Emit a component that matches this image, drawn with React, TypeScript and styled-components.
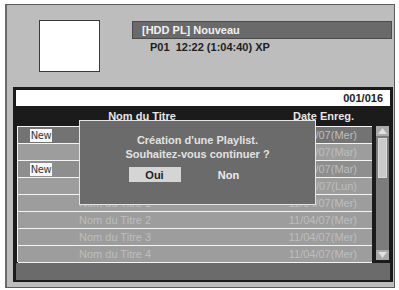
import React from 'react';
import styled, { createGlobalStyle } from 'styled-components';

const GlobalStyle = createGlobalStyle`
  html, body {
    margin: 0;
    padding: 0;
    background: #ffffff;
  }
  body {
    font-family: "Liberation Sans", Arial, sans-serif;
  }
`;

interface Row {
  isNew?: boolean;
  title: string;
  date: string;
  tone: 'dark' | 'mid' | 'light';
}

// titles of the first rows sit behind the dialog
const rows: Row[] = [
  { isNew: true, title: '', date: '11/04/07(Mer)', tone: 'dark' },
  { title: '', date: '11/04/07(Mar)', tone: 'light' },
  { isNew: true, title: '', date: '11/04/07(Mar)', tone: 'mid' },
  { title: '', date: '11/04/07(Lun)', tone: 'light' },
  { title: 'Nom du Titre 1', date: '11/04/07(Mer)', tone: 'light' },
  { title: 'Nom du Titre 2', date: '11/04/07(Mer)', tone: 'light' },
  { title: 'Nom du Titre 3', date: '11/04/07(Mer)', tone: 'light' },
  { title: 'Nom du Titre 4', date: '11/04/07(Mer)', tone: 'light' },
];

const toneColors = {
  dark: '#737373',
  mid: '#8e8e8e',
  light: '#9d9d9d',
};

const Frame = styled.div`
  position: relative;
  box-sizing: border-box;
  margin: 4px 0 0 5px;
  width: 390px;
  height: 284px;
  background: #bdbdbd;
  border: 1px solid #5a5a5a;
  border-left: 2px solid #6a6a6a;
`;

const Top = styled.div`
  display: flex;
  height: 82px;
`;

const Thumb = styled.div`
  box-sizing: border-box;
  margin: 15px 0 0 32px;
  width: 61px;
  height: 52px;
  background: #ffffff;
  border: 1px solid #3a3a3a;
`;

const Info = styled.div`
  display: flex;
  flex-direction: column;
  margin: 16px 0 0 32px;
`;

const TitleBar = styled.div`
  box-sizing: border-box;
  width: 260px;
  height: 18px;
  padding-left: 9px;
  background: #6a6a6a;
  border: 1px solid #4a4a4a;
  color: #f2f2f2;
  font-weight: bold;
  font-size: 11px;
  line-height: 16px;
`;

const SubInfo = styled.div`
  margin: 1px 0 0 18px;
  color: #1e1e1e;
  font-weight: bold;
  font-size: 11px;
  line-height: 14px;
  white-space: pre;
`;

const ListPanel = styled.div`
  box-sizing: border-box;
  display: flex;
  flex-direction: column;
  margin-left: 6px;
  width: 380px;
  height: 195px;
  padding: 3px 3px 2px 3px;
  background: #1b1b1b;
`;

const CounterBar = styled.div`
  height: 16px;
  padding-right: 7px;
  background: #ffffff;
  color: #1b1b1b;
  font-weight: bold;
  font-size: 11px;
  line-height: 17px;
  text-align: right;
`;

const HeaderRow = styled.div`
  display: flex;
  height: 20px;
  color: #e6e6e6;
  font-weight: bold;
  font-size: 11px;
  line-height: 20px;
`;

const HeaderTitle = styled.div`
  width: 252px;
  text-align: center;
`;

const HeaderDate = styled.div`
  padding-left: 25px;
`;

const Body = styled.div`
  display: flex;
  height: 136px;
`;

const Rows = styled.div`
  box-sizing: border-box;
  margin-left: 1px;
  width: 355px;
  border-left: 1px solid #f4f4f4;
  border-top: 1px solid #f4f4f4;
`;

const RowItem = styled.div<{ $tone: Row['tone'] }>`
  display: flex;
  align-items: center;
  height: 16px;
  border-bottom: 1px solid #f4f4f4;
  background: ${(p) => toneColors[p.$tone]};
  color: #bdbdbd;
  font-size: 11px;
`;

const NewSlot = styled.div`
  width: 61px;
  padding-left: 12px;
  box-sizing: border-box;
`;

const NewBadge = styled.span`
  display: inline-block;
  width: 22px;
  height: 13px;
  background: #f8f8f8;
  color: #3a3a3a;
  font-family: "Liberation Sans Narrow", "DejaVu Sans Condensed", sans-serif;
  font-size: 11px;
  line-height: 14px;
  text-align: center;
  letter-spacing: -0.3px;
`;

const RowTitle = styled.div`
  flex: 1;
`;

const RowDate = styled.div`
  padding-right: 15px;
`;

const ScrollBar = styled.div`
  display: flex;
  flex-direction: column;
  justify-content: space-between;
  margin-left: 4px;
  width: 13px;
  height: 134px;
  background: #7c7c7c;
`;

const ArrowBox = styled.div`
  display: flex;
  align-items: center;
  justify-content: center;
  height: 10px;
  background: #a9a9a9;
`;

const Thumbwheel = styled.div`
  box-sizing: border-box;
  margin: 2px 0 0 2px;
  width: 9px;
  height: 40px;
  background: #cacaca;
  border: 1px solid #dcdcdc;
`;

const Track = styled.div`
  flex: 1;
`;

const BottomBand = styled.div`
  margin-top: 1px;
  flex: 1;
  background: #6b6b6b;
`;

const Dialog = styled.div`
  position: absolute;
  left: 72px;
  top: 115px;
  box-sizing: border-box;
  width: 237px;
  height: 85px;
  display: flex;
  flex-direction: column;
  align-items: center;
  padding-top: 12px;
  background: #6b6b6b;
  border: 1px solid #e4e4e4;
  color: #e2e2e2;
  font-weight: bold;
  font-size: 11px;
`;

const DialogLine = styled.div`
  line-height: 14px;
`;

const Buttons = styled.div`
  display: flex;
  gap: 22px;
  margin-top: 6px;
  padding-right: 12px;
`;

const DialogButton = styled.div<{ $active?: boolean }>`
  width: 52px;
  height: 15px;
  line-height: 16px;
  text-align: center;
  background: ${(p) => (p.$active ? '#d5d5d5' : 'transparent')};
  color: ${(p) => (p.$active ? '#1e1e1e' : '#ececec')};
`;

const Arrow: React.FC<{ up?: boolean }> = ({ up }) => (
  <svg width="9" height="6" viewBox="0 0 9 6">
    <polygon points={up ? '0,6 4.5,0 9,6' : '0,0 4.5,6 9,0'} fill="#e0e0e0" />
  </svg>
);

export default function App() {
  return (
    <>
      <GlobalStyle />
      <Frame>
        <Top>
          <Thumb />
          <Info>
            <TitleBar>[HDD PL] Nouveau</TitleBar>
            <SubInfo>P01  12:22 (1:04:40) XP</SubInfo>
          </Info>
        </Top>
        <ListPanel>
          <CounterBar>001/016</CounterBar>
          <HeaderRow>
            <HeaderTitle>Nom du Titre</HeaderTitle>
            <HeaderDate>Date Enreg.</HeaderDate>
          </HeaderRow>
          <Body>
            <Rows>
              {rows.map((r, i) => (
                <RowItem key={i} $tone={r.tone}>
                  <NewSlot>{r.isNew && <NewBadge>New</NewBadge>}</NewSlot>
                  <RowTitle>{r.title}</RowTitle>
                  <RowDate>{r.date}</RowDate>
                </RowItem>
              ))}
            </Rows>
            <ScrollBar>
              <ArrowBox>
                <Arrow up />
              </ArrowBox>
              <Track>
                <Thumbwheel />
              </Track>
              <ArrowBox>
                <Arrow />
              </ArrowBox>
            </ScrollBar>
          </Body>
          <BottomBand />
        </ListPanel>
        <Dialog>
          <DialogLine>Création d'une Playlist.</DialogLine>
          <DialogLine>Souhaitez-vous continuer ?</DialogLine>
          <Buttons>
            <DialogButton $active>Oui</DialogButton>
            <DialogButton>Non</DialogButton>
          </Buttons>
        </Dialog>
      </Frame>
    </>
  );
}
